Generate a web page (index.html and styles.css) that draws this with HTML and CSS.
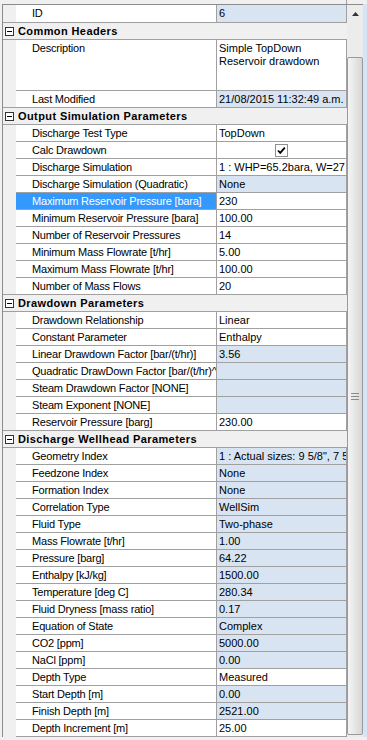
FILE: index.html
```html
<!DOCTYPE html>
<html lang="en">
<head>
  <meta charset="UTF-8" />
  <meta name="viewport" content="width=device-width, initial-scale=1.0" />
  <title>Discharge Properties</title>
  <link rel="stylesheet" href="styles.css">
</head>
<body>
  <div class="topbar"></div>
  <div class="window">
    <div class="frame">
      <div class="grid">
        <div class="row"><div class="gut"></div><div class="name">ID</div><div class="val ro">6</div></div>

        <div class="cat"><span class="toggle"></span>Common Headers</div>
        <div class="row tall"><div class="gut"></div><div class="name">Description</div><div class="val">Simple TopDown<br>Reservoir drawdown</div></div>
        <div class="row"><div class="gut"></div><div class="name">Last Modified</div><div class="val ro">21/08/2015 11:32:49 a.m.</div></div>

        <div class="cat"><span class="toggle"></span>Output Simulation Parameters</div>
        <div class="row"><div class="gut"></div><div class="name">Discharge Test Type</div><div class="val">TopDown</div></div>
        <div class="row"><div class="gut"></div><div class="name">Calc Drawdown</div><div class="val center"><span class="check"><svg width="11" height="11" viewBox="0 0 11 11"><path d="M2 5.5 L4.2 7.8 L8.8 2.6" fill="none" stroke="#000" stroke-width="1.8"/></svg></span></div></div>
        <div class="row"><div class="gut"></div><div class="name">Discharge Simulation</div><div class="val">1 : WHP=65.2bara, W=27.4t/hr</div></div>
        <div class="row"><div class="gut"></div><div class="name">Discharge Simulation (Quadratic)</div><div class="val ro">None</div></div>
        <div class="row"><div class="gut"></div><div class="name sel">Maximum Reservoir Pressure [bara]</div><div class="val">230</div></div>
        <div class="row"><div class="gut"></div><div class="name">Minimum Reservoir Pressure [bara]</div><div class="val">100.00</div></div>
        <div class="row"><div class="gut"></div><div class="name">Number of Reservoir Pressures</div><div class="val">14</div></div>
        <div class="row"><div class="gut"></div><div class="name">Minimum Mass Flowrate [t/hr]</div><div class="val">5.00</div></div>
        <div class="row"><div class="gut"></div><div class="name">Maximum Mass Flowrate [t/hr]</div><div class="val">100.00</div></div>
        <div class="row"><div class="gut"></div><div class="name">Number of Mass Flows</div><div class="val">20</div></div>

        <div class="cat"><span class="toggle"></span>Drawdown Parameters</div>
        <div class="row"><div class="gut"></div><div class="name">Drawdown Relationship</div><div class="val">Linear</div></div>
        <div class="row"><div class="gut"></div><div class="name">Constant Parameter</div><div class="val">Enthalpy</div></div>
        <div class="row"><div class="gut"></div><div class="name">Linear Drawdown Factor [bar/(t/hr)]</div><div class="val ro">3.56</div></div>
        <div class="row"><div class="gut"></div><div class="name">Quadratic DrawDown Factor [bar/(t/hr)^2]</div><div class="val ro"></div></div>
        <div class="row"><div class="gut"></div><div class="name">Steam Drawdown Factor [NONE]</div><div class="val ro"></div></div>
        <div class="row"><div class="gut"></div><div class="name">Steam Exponent [NONE]</div><div class="val ro"></div></div>
        <div class="row"><div class="gut"></div><div class="name">Reservoir Pressure [barg]</div><div class="val">230.00</div></div>

        <div class="cat"><span class="toggle"></span>Discharge Wellhead Parameters</div>
        <div class="row"><div class="gut"></div><div class="name">Geometry Index</div><div class="val ro">1 : Actual sizes: 9 5/8", 7 5/8"</div></div>
        <div class="row"><div class="gut"></div><div class="name">Feedzone Index</div><div class="val ro">None</div></div>
        <div class="row"><div class="gut"></div><div class="name">Formation Index</div><div class="val ro">None</div></div>
        <div class="row"><div class="gut"></div><div class="name">Correlation Type</div><div class="val ro">WellSim</div></div>
        <div class="row"><div class="gut"></div><div class="name">Fluid Type</div><div class="val ro">Two-phase</div></div>
        <div class="row"><div class="gut"></div><div class="name">Mass Flowrate [t/hr]</div><div class="val ro">1.00</div></div>
        <div class="row"><div class="gut"></div><div class="name">Pressure [barg]</div><div class="val ro">64.22</div></div>
        <div class="row"><div class="gut"></div><div class="name">Enthalpy [kJ/kg]</div><div class="val ro">1500.00</div></div>
        <div class="row"><div class="gut"></div><div class="name">Temperature [deg C]</div><div class="val ro">280.34</div></div>
        <div class="row"><div class="gut"></div><div class="name">Fluid Dryness [mass ratio]</div><div class="val ro">0.17</div></div>
        <div class="row"><div class="gut"></div><div class="name">Equation of State</div><div class="val ro">Complex</div></div>
        <div class="row"><div class="gut"></div><div class="name">CO2 [ppm]</div><div class="val ro">5000.00</div></div>
        <div class="row"><div class="gut"></div><div class="name">NaCl [ppm]</div><div class="val ro">0.00</div></div>
        <div class="row"><div class="gut"></div><div class="name">Depth Type</div><div class="val">Measured</div></div>
        <div class="row"><div class="gut"></div><div class="name">Start Depth [m]</div><div class="val ro">0.00</div></div>
        <div class="row"><div class="gut"></div><div class="name">Finish Depth [m]</div><div class="val ro">2521.00</div></div>
        <div class="row"><div class="gut"></div><div class="name">Depth Increment [m]</div><div class="val">25.00</div></div>
      </div>

      <div class="scroll">
        <div class="arrow"><svg width="7" height="4" viewBox="0 0 7 4"><path d="M0 4 L3.5 0 L7 4 Z" fill="#333"/></svg></div>
        <div class="thumb"><span class="grip"></span></div>
      </div>
    </div>
    <div class="edge"></div>
  </div>
</body>
</html>
```

FILE: styles.css
```css
body { margin: 0; background: #f0f0f0; font-family: "Liberation Sans", Arial, sans-serif; font-size: 11px; color: #000; overflow: hidden; }

.topbar { height: 4px; width: 347px; border-right: 1px solid #a0a0a0; box-sizing: border-box; }
.window { display: flex; }
.frame { display: flex; margin-left: 2px; border-top: 1px solid #8c8c8c; border-left: 1px solid #8c8c8c; }
.edge { width: 4px; background: #d6e5f6; }

.grid { width: 344px; display: flex; flex-direction: column; }
.row { display: grid; grid-template-columns: 13px 201px 130px; }
.gut { background: #f0f0f0; }
.name, .val { height: 16px; line-height: 16px; white-space: nowrap; overflow: hidden; border-bottom: 1px solid #a0a0a0; border-right: 1px solid #a0a0a0; background: #fff; }
.name { padding-left: 16px; letter-spacing: -0.2px; }
.val { padding-left: 2px; }
.val.ro { background: #d9e4f2; }
.name.sel { background: #3399ff; color: #fff; }
.center { display: flex; justify-content: center; align-items: center; padding-left: 0; }
.row:first-child .name, .row:first-child .val { height: 17px; line-height: 17px; }

.tall .name, .tall .val { height: 48px; line-height: 13px; padding-top: 2px; white-space: normal; }

.cat { position: relative; margin-top: -1px; height: 16px; line-height: 16px; display: flex; align-items: center; border-top: 1px solid #a0a0a0; border-bottom: 1px solid #a0a0a0; background: #f0f0f0; font-weight: bold; letter-spacing: 0.4px; white-space: nowrap; overflow: hidden; }
.toggle { width: 7px; height: 7px; margin: 0 4px 0 2px; border: 1px solid #333; background: #fff; display: flex; align-items: center; justify-content: center; }
.toggle::before { content: ""; width: 5px; height: 1px; background: #000; }

.check { width: 11px; height: 11px; border: 1px solid #8e8f8f; background: #fff; display: flex; }

.scroll { width: 16px; display: flex; flex-direction: column; background: #ececec; }
.arrow { height: 17px; display: flex; align-items: center; justify-content: center; }
.thumb { margin-top: 35px; height: 676px; width: 14px; border: 1px solid #9a9a9a; border-radius: 2px; background: linear-gradient(to right, #f4f4f4, #e6e6e6 50%, #d6d6d6); display: flex; align-items: center; justify-content: center; }
.grip { width: 8px; height: 5px; border-top: 1px solid #8a8a8a; border-bottom: 1px solid #8a8a8a; position: relative; }
.grip::before { content: ""; display: block; margin-top: 2px; height: 1px; background: #8a8a8a; }
```
